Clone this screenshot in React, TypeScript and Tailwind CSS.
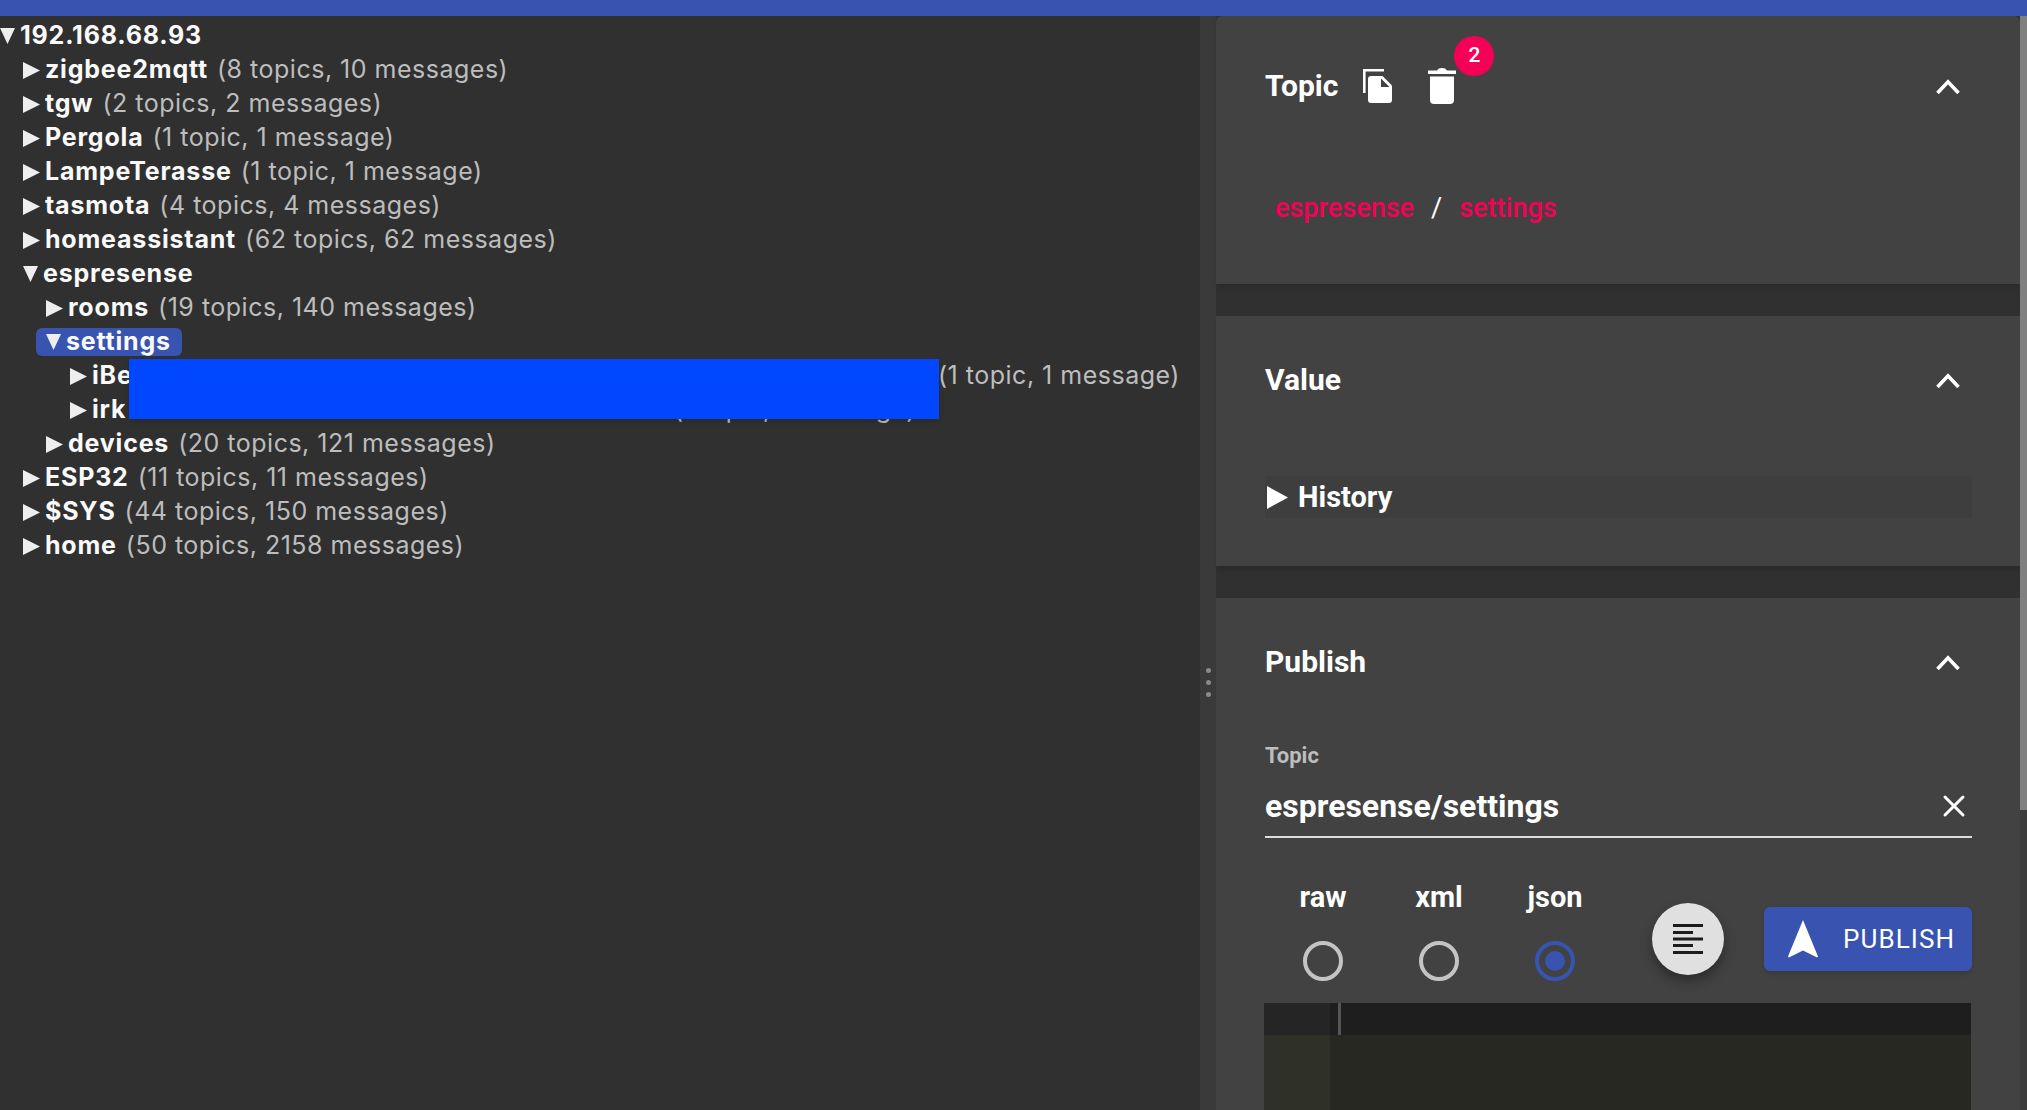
import type { ReactNode } from "react";
import { X } from "lucide-react";

type Row = {
  name: string;
  meta?: string;
  level: number;
  open?: boolean;
  selected?: boolean;
  nameWidth?: string;
};

const ROWS: Row[] = [
  { name: "192.168.68.93", level: 0, open: true },
  { name: "zigbee2mqtt", meta: "(8 topics, 10 messages)", level: 1 },
  { name: "tgw", meta: "(2 topics, 2 messages)", level: 1 },
  { name: "Pergola", meta: "(1 topic, 1 message)", level: 1 },
  { name: "LampeTerasse", meta: "(1 topic, 1 message)", level: 1 },
  { name: "tasmota", meta: "(4 topics, 4 messages)", level: 1 },
  { name: "homeassistant", meta: "(62 topics, 62 messages)", level: 1 },
  { name: "espresense", level: 1, open: true },
  { name: "rooms", meta: "(19 topics, 140 messages)", level: 2 },
  { name: "settings", level: 2, open: true, selected: true },
  { name: "iBeacon", meta: "(1 topic, 1 message)", level: 3, nameWidth: "w-[837px]" },
  { name: "irk", meta: "(1 topic, 1 message)", level: 3, nameWidth: "w-[573px]" },
  { name: "devices", meta: "(20 topics, 121 messages)", level: 2 },
  { name: "ESP32", meta: "(11 topics, 11 messages)", level: 1 },
  { name: "$SYS", meta: "(44 topics, 150 messages)", level: 1 },
  { name: "home", meta: "(50 topics, 2158 messages)", level: 1 },
];

const INDENT = ["pl-0", "pl-[23px]", "pl-[46px]", "pl-[70px]"];

function Arrow({ open }: { open?: boolean }) {
  if (open) {
    return (
      <svg viewBox="0 0 15 16" className="h-[16px] w-[15px] shrink-0 fill-[#eeeeee]">
        <polygon points="0,0 15,0 7.5,16" />
      </svg>
    );
  }
  return (
    <svg viewBox="0 0 17 17" className="h-[17px] w-[17px] shrink-0 fill-[#eeeeee]">
      <polygon points="0,0 17,8.5 0,17" />
    </svg>
  );
}

function TreeRow({ row }: { row: Row }) {
  return (
    <div className={`flex h-[34px] items-center ${INDENT[row.level]}`}>
      <div
        className={`flex h-[28px] items-center rounded-[6px] ${
          row.selected ? "-ml-[10px] bg-[#3853b0] pl-[10px] pr-[11px]" : ""
        }`}
      >
        <Arrow open={row.open} />
        <span
          className={`ml-[5px] overflow-hidden font-bold tracking-[0.8px] whitespace-nowrap text-[#fafafa] ${
            row.nameWidth ?? ""
          }`}
        >
          {row.name}
        </span>
        {row.meta && (
          <span className="ml-[9px] font-normal tracking-[0.5px] whitespace-nowrap text-[#bdbdbd]">
            {row.meta}
          </span>
        )}
      </div>
    </div>
  );
}

function Tree() {
  return (
    <div className="relative h-full w-[1200px] shrink-0 bg-[#303030] pt-[3px] font-['Inter',sans-serif] text-[25px]">
      {ROWS.map((r) => (
        <TreeRow key={r.name} row={r} />
      ))}
      {/* redaction block sitting over the two rows */}
      <div className="absolute top-[343px] left-[129px] h-[60px] w-[810px] bg-[#0047ff] shadow-md" />
    </div>
  );
}

function Heading({ title, children }: { title: string; children?: ReactNode }) {
  return (
    <div className="flex items-center pr-[12px]">
      <span className="text-[30px] leading-[36px] font-bold text-white">{title}</span>
      {children}
      <svg viewBox="0 0 24 15" className="ml-auto h-[15px] w-[24px] fill-none stroke-white stroke-[3.6]">
        <path d="M1.5 14 12 2.8 22.5 14" />
      </svg>
    </div>
  );
}

function CopyIcon() {
  return (
    <svg viewBox="0 0 29 34" className="ml-[25px] h-[34px] w-[29px] fill-white">
      <path d="M0 0h21v2.6H2.6V24H0z" />
      <path
        fillRule="evenodd"
        d="M8 7h11.5L29 16.5V31a3 3 0 0 1-3 3H8a3 3 0 0 1-3-3V10a3 3 0 0 1 3-3z"
      />
      <path d="M18 9.5 26.5 18H18z" fill="#424242" />
    </svg>
  );
}

function TrashIcon() {
  return (
    <svg viewBox="0 0 28 36" className="ml-[36px] h-[36px] w-[28px] fill-white">
      <path d="M0 2.5h9C10 .8 11.5 0 14 0s4 .8 5 2.5h9V6H0z" />
      <path d="M2 8.5h24V32a4 4 0 0 1-4 4H6a4 4 0 0 1-4-4z" />
    </svg>
  );
}

function FormatIcon() {
  return (
    <svg viewBox="0 0 30 30" className="h-[30px] w-[30px] fill-[#1c1c1c]">
      <rect y="0" width="30" height="3" />
      <rect y="7" width="20" height="3" />
      <rect y="13.5" width="30" height="3" />
      <rect y="20" width="20" height="3" />
      <rect y="27" width="30" height="3" />
    </svg>
  );
}

function NavIcon() {
  return (
    <svg viewBox="0 0 30 38" className="h-[38px] w-[30px] fill-white">
      <path d="M15 0 30 36.5l-.9 1L15 30.5.9 37.5l-.9-1z" />
    </svg>
  );
}

function Radio({ label, checked }: { label: string; checked?: boolean }) {
  return (
    <div className="flex w-[116px] flex-col items-center">
      <span className="text-[29px] leading-[36px] font-bold text-white">{label}</span>
      <span
        className={`mt-[26px] flex h-[40px] w-[40px] items-center justify-center rounded-full border-[4px] ${
          checked ? "border-[#3853b0]" : "border-[#c4c4c4]"
        }`}
      >
        {checked && <span className="h-[20px] w-[20px] rounded-full bg-[#3853b0]" />}
      </span>
    </div>
  );
}

function Details() {
  return (
    <div className="flex h-full min-w-0 flex-1 flex-col gap-[32px] font-['Roboto',sans-serif]">
      <section className="h-[268px] shrink-0 rounded-t-[6px] bg-[#424242] pt-[52px] pr-[48px] pl-[49px] shadow-md">
        <Heading title="Topic">
          <CopyIcon />
          <div className="relative">
            <TrashIcon />
            <span className="absolute -top-[32px] -right-[38px] flex h-[40px] w-[40px] items-center justify-center rounded-full bg-[#f50057] text-[21px] font-medium text-white">
              2
            </span>
          </div>
        </Heading>
        <div className="mt-[86px] flex items-center pl-[10px] text-[27px] leading-[36px] font-medium text-[#f50057]">
          <span>espresense</span>
          <span className="mx-[17px] font-normal text-white">/</span>
          <span>settings</span>
        </div>
      </section>

      <section className="h-[250px] shrink-0 bg-[#424242] pt-[46px] pr-[48px] pl-[49px] shadow-md">
        <Heading title="Value" />
        <div className="mt-[78px] flex h-[42px] items-center bg-[#3e3e3e] pl-[2px]">
          <svg viewBox="0 0 21 23" className="h-[23px] w-[21px] fill-white">
            <polygon points="0,0 21,11.5 0,23" />
          </svg>
          <span className="ml-[10px] pt-[1px] text-[29px] font-bold text-white">History</span>
        </div>
      </section>

      <section className="flex-1 bg-[#424242] pt-[46px] pr-[48px] pl-[49px]">
        <Heading title="Publish" />
        <div className="mt-[64px] text-[22px] leading-[24px] font-bold text-[#bdbdbd]">Topic</div>
        <div className="mt-[14px] flex h-[56px] items-center justify-between border-b-[2px] border-[#dddddd] pb-[6px]">
          <span className="text-[32px] font-bold text-white">espresense/settings</span>
          <X className="h-[36px] w-[36px] text-white" strokeWidth={2} />
        </div>
        <div className="mt-[41px] flex items-start">
          <div className="flex">
            <Radio label="raw" />
            <Radio label="xml" />
            <Radio label="json" checked />
          </div>
          <button className="mt-[24px] ml-[39px] flex h-[72px] w-[72px] items-center justify-center rounded-full bg-[#e0e0e0] shadow-[0_6px_12px_rgba(0,0,0,0.35)]">
            <FormatIcon />
          </button>
          <button className="mt-[28px] ml-[40px] flex h-[64px] w-[208px] items-center rounded-[6px] bg-[#3853b0] pl-[24px] shadow-md">
            <NavIcon />
            <span className="ml-[25px] text-[26px] tracking-[1.1px] text-white">PUBLISH</span>
          </button>
        </div>
        <div className="mt-[22px] flex h-[200px] -translate-x-[1px] bg-[#272822]">
          <div className="h-full w-[66px] bg-[#2f3129]">
            <div className="h-[32px] bg-[#252525]" />
          </div>
          <div className="flex h-[32px] flex-1 bg-[#1e1e1e] pl-[8px]">
            <div className="h-full w-[3px] bg-[#555555]" />
          </div>
        </div>
      </section>
    </div>
  );
}

export default function App() {
  return (
    <div className="flex h-screen w-full flex-col overflow-hidden bg-[#303030]">
      <div className="h-[16px] shrink-0 bg-[#3853b0]" />
      <div className="flex min-h-0 flex-1">
        <Tree />
        <div className="flex h-full w-[16px] shrink-0 flex-col items-center justify-center gap-[7px] bg-[#3a3a3a] pt-[238px]">
          <span className="h-[5px] w-[5px] rounded-full bg-[#8a8a8a]" />
          <span className="h-[5px] w-[5px] rounded-full bg-[#8a8a8a]" />
          <span className="h-[5px] w-[5px] rounded-full bg-[#8a8a8a]" />
        </div>
        <Details />
        <div className="h-full w-[7px] shrink-0 bg-[#3c3c3c]">
          <div className="h-[794px] bg-[#808080]" />
        </div>
      </div>
    </div>
  );
}
